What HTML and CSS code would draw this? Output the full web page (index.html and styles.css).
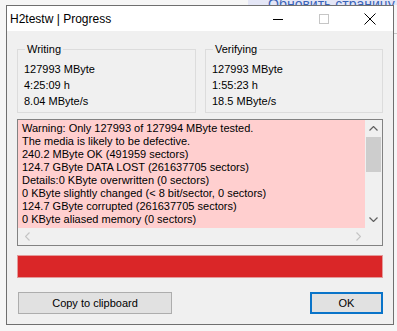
FILE: index.html
```html
<!DOCTYPE html>
<html lang="en">
<head>
    <meta charset="UTF-8">
    <title>H2testw | Progress</title>
    <link rel="stylesheet" href="styles.css">
</head>
<body>
    <!-- page behind the dialog -->
    <div class="backdrop-link">Обновить страницу</div>
    <div class="backdrop-line"></div>

    <div class="window">
        <div class="titlebar">
            <span class="title">H2testw | Progress</span>
            <div class="controls">
                <span class="ctl">
                    <svg width="10" height="10" viewBox="0 0 10 10"><path d="M0 5.5h10" stroke="#000" stroke-width="1"/></svg>
                </span>
                <span class="ctl">
                    <svg width="10" height="10" viewBox="0 0 10 10"><rect x="0.5" y="0.5" width="9" height="9" fill="none" stroke="#c6c6c6"/></svg>
                </span>
                <span class="ctl">
                    <svg width="12" height="12" viewBox="0 0 12 12"><path d="M0.5 0.5l11 11M11.5 0.5l-11 11" stroke="#000" stroke-width="1"/></svg>
                </span>
            </div>
        </div>

        <div class="client">
            <div class="groups">
                <fieldset class="group">
                    <legend>Writing</legend>
                    <div class="values">
                        <div>127993 MByte</div>
                        <div>4:25:09 h</div>
                        <div>8.04 MByte/s</div>
                    </div>
                </fieldset>
                <fieldset class="group">
                    <legend>Verifying</legend>
                    <div class="values">
                        <div>127993 MByte</div>
                        <div>1:55:23 h</div>
                        <div>18.5 MByte/s</div>
                    </div>
                </fieldset>
            </div>

            <div class="log">
                <div class="log-text">
                    <div>Warning: Only 127993 of 127994 MByte tested.</div>
                    <div>The media is likely to be defective.</div>
                    <div>240.2 MByte OK (491959 sectors)</div>
                    <div>124.7 GByte DATA LOST (261637705 sectors)</div>
                    <div>Details:0 KByte overwritten (0 sectors)</div>
                    <div>0 KByte slightly changed (&lt; 8 bit/sector, 0 sectors)</div>
                    <div>124.7 GByte corrupted (261637705 sectors)</div>
                    <div>0 KByte aliased memory (0 sectors)</div>
                </div>
                <div class="vscroll">
                    <svg class="arrow" width="9" height="5" viewBox="0 0 9 5"><path d="M0.5 4.5l4-4 4 4" fill="none" stroke="#606060" stroke-width="1.2"/></svg>
                    <div class="thumb"></div>
                    <div class="vspace"></div>
                    <svg class="arrow" width="9" height="5" viewBox="0 0 9 5"><path d="M0.5 0.5l4 4 4-4" fill="none" stroke="#606060" stroke-width="1.2"/></svg>
                </div>
                <div class="hscroll">
                    <svg width="5" height="9" viewBox="0 0 5 9"><path d="M4.5 0.5l-4 4 4 4" fill="none" stroke="#c4c4c4" stroke-width="1.2"/></svg>
                    <svg width="5" height="9" viewBox="0 0 5 9"><path d="M0.5 0.5l4 4-4 4" fill="none" stroke="#c4c4c4" stroke-width="1.2"/></svg>
                </div>
                <div class="corner"></div>
            </div>

            <div class="progress"></div>

            <div class="buttons">
                <button class="btn copy">Copy to clipboard</button>
                <button class="btn ok">OK</button>
            </div>
        </div>
    </div>
</body>
</html>
```

FILE: styles.css
```css
body {
    margin: 0;
    background-color: #f6f6f6;
    font-family: "Liberation Sans", Arial, sans-serif;
    font-size: 11px;
    color: #000;
    overflow: hidden;
    height: 331px;
    position: relative;
}

.backdrop-link {
    position: absolute;
    left: 248px;
    top: 0;
    width: 129px;
    height: 5px;
    padding-left: 20px;
    background-color: #e4e6f6;
    color: #3a64b8;
    font-size: 14px;
    line-height: 8px;
    white-space: nowrap;
    overflow: hidden;
}

.backdrop-line {
    position: absolute;
    left: 393px;
    top: 33px;
    width: 10px;
    border-top: 1px solid #c8c8c8;
}

.window {
    position: relative;
    margin: 5px 0 0 6px;
    width: 388px;
    height: 320px;
    box-sizing: border-box;
    border: 1px solid #6f6f6f;
    background-color: #f0f0f0;
    display: flex;
    flex-direction: column;
}

.titlebar {
    height: 25px;
    background-color: #fff;
    display: flex;
    align-items: center;
    justify-content: space-between;
}

.title {
    padding-left: 3px;
    font-size: 12px;
    color: #000;
}

.controls {
    display: flex;
    height: 100%;
}

.ctl {
    width: 46px;
    display: flex;
    align-items: center;
    justify-content: center;
}

.client {
    flex: 1;
    padding: 12px 10px 0 10px;
}

.groups {
    display: grid;
    grid-template-columns: 179px 178px;
    gap: 9px;
}

.group {
    margin: 0;
    padding: 0 4px 3px 6px;
    border: 1px solid #dcdcdc;
    min-width: 0;
}

.group legend {
    padding: 0 2px;
    margin-left: 1px;
    line-height: 13px;
}

.values {
    margin-top: 5px;
    line-height: 16px;
}

.log {
    margin-top: 6px;
    height: 127px;
    box-sizing: border-box;
    border: 1px solid #828282;
    display: grid;
    grid-template-columns: 1fr 17px;
    grid-template-rows: 1fr 17px;
    background-color: #f0f0f0;
}

.log-text {
    background-color: #ffcfcf;
    padding: 2px 0 0 4px;
    line-height: 13px;
    white-space: nowrap;
    overflow: hidden;
}

.vscroll {
    display: flex;
    flex-direction: column;
    align-items: center;
    background-color: #f0f0f0;
}

.vscroll .arrow {
    margin: 6px 0;
}

.thumb {
    width: 15px;
    height: 35px;
    background-color: #cdcdcd;
}

.vspace {
    flex: 1;
}

.hscroll {
    display: flex;
    align-items: center;
    justify-content: space-between;
    padding: 0 4px 0 7px;
}

.progress {
    margin-top: 9px;
    height: 23px;
    box-sizing: border-box;
    border: 1px solid #e39a9a;
    background-color: #da2628;
}

.buttons {
    margin-top: 14px;
    display: flex;
    justify-content: space-between;
}

.btn {
    height: 22px;
    font-family: "Liberation Sans", Arial, sans-serif;
    font-size: 11px;
    color: #000;
    background-color: #e1e1e1;
    border: 1px solid #adadad;
    padding: 0;
}

.copy {
    width: 154px;
    margin-left: 1px;
}

.ok {
    width: 73px;
    border: 2px solid #0a74c9;
}
```
